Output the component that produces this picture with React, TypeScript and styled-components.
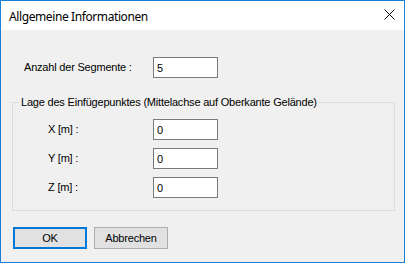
import styled, { createGlobalStyle } from "styled-components";

const GlobalStyle = createGlobalStyle`
  html, body {
    margin: 0;
    padding: 0;
    background: #ffffff;
  }
`;

const Window = styled.div`
  box-sizing: border-box;
  width: 405px;
  height: 263px;
  border: 1px solid #1a7fd4;
  display: flex;
  flex-direction: column;
  background: #f0f0f0;
  font-family: "Liberation Sans", Arial, sans-serif;
  font-size: 11px;
  letter-spacing: -0.2px;
  color: #000000;
`;

const TitleBar = styled.div`
  height: 29px;
  flex-shrink: 0;
  background: #ffffff;
  display: flex;
  align-items: center;
  justify-content: space-between;
  padding: 0 9px 0 8px;
`;

const Title = styled.span`
  font-family: "Noto Sans", "Open Sans", sans-serif;
  font-size: 12px;
  letter-spacing: -0.4px;
  padding-top: 1px;
`;

const CloseButton = styled.div`
  width: 12px;
  height: 12px;
  display: flex;
  align-items: center;
  justify-content: center;
  margin-bottom: 2px;
`;

const Content = styled.div`
  display: flex;
  flex-direction: column;
  padding: 27px 0 0 11px;
`;

const Row = styled.div<{ $labelWidth: number; $indent: number }>`
  display: grid;
  grid-template-columns: ${(p) => p.$labelWidth}px 65px;
  align-items: center;
  padding-left: ${(p) => p.$indent}px;
`;

const Label = styled.span`
  line-height: 13px;
`;

const Field = styled.div`
  box-sizing: border-box;
  width: 65px;
  height: 21px;
  border: 1px solid #7a7a7a;
  background: #ffffff;
  padding-left: 3px;
  display: flex;
  align-items: center;
`;

const Group = styled.fieldset`
  box-sizing: border-box;
  width: 383px;
  margin: 18px 0 0 0;
  border: 1px solid #dcdcdc;
  padding: 10px 0 12px 6px;
  display: flex;
  flex-direction: column;
  gap: 8px;
`;

const Legend = styled.legend`
  padding: 0 2px;
  line-height: 13px;
`;

const Buttons = styled.div`
  display: flex;
  gap: 7px;
  margin: 16px 0 0 1px;
`;

const Button = styled.div<{ $default?: boolean }>`
  box-sizing: border-box;
  width: 74px;
  height: 22px;
  background: #e1e1e1;
  border: ${(p) => (p.$default ? "2px solid #0078d7" : "1px solid #adadad")};
  display: flex;
  align-items: center;
  justify-content: center;
`;

const rows = [
  { label: "X [m] :", value: "0" },
  { label: "Y [m] :", value: "0" },
  { label: "Z [m] :", value: "0" },
];

export default function App() {
  return (
    <>
      <GlobalStyle />
      <Window>
        <TitleBar>
          <Title>Allgemeine Informationen</Title>
          <CloseButton>
            <svg width="11" height="11" viewBox="0 0 11 11">
              <path d="M0.5 0.5 L10.5 10.5 M10.5 0.5 L0.5 10.5" stroke="#000" strokeWidth="1" />
            </svg>
          </CloseButton>
        </TitleBar>
        <Content>
          <Row $labelWidth={129} $indent={12}>
            <Label>Anzahl der Segmente :</Label>
            <Field>5</Field>
          </Row>
          <Group>
            <Legend>Lage des Einfügepunktes (Mittelachse auf Oberkante Gelände)</Legend>
            {rows.map((r) => (
              <Row key={r.label} $labelWidth={105} $indent={29}>
                <Label>{r.label}</Label>
                <Field>{r.value}</Field>
              </Row>
            ))}
          </Group>
          <Buttons>
            <Button $default>OK</Button>
            <Button>Abbrechen</Button>
          </Buttons>
        </Content>
      </Window>
    </>
  );
}
